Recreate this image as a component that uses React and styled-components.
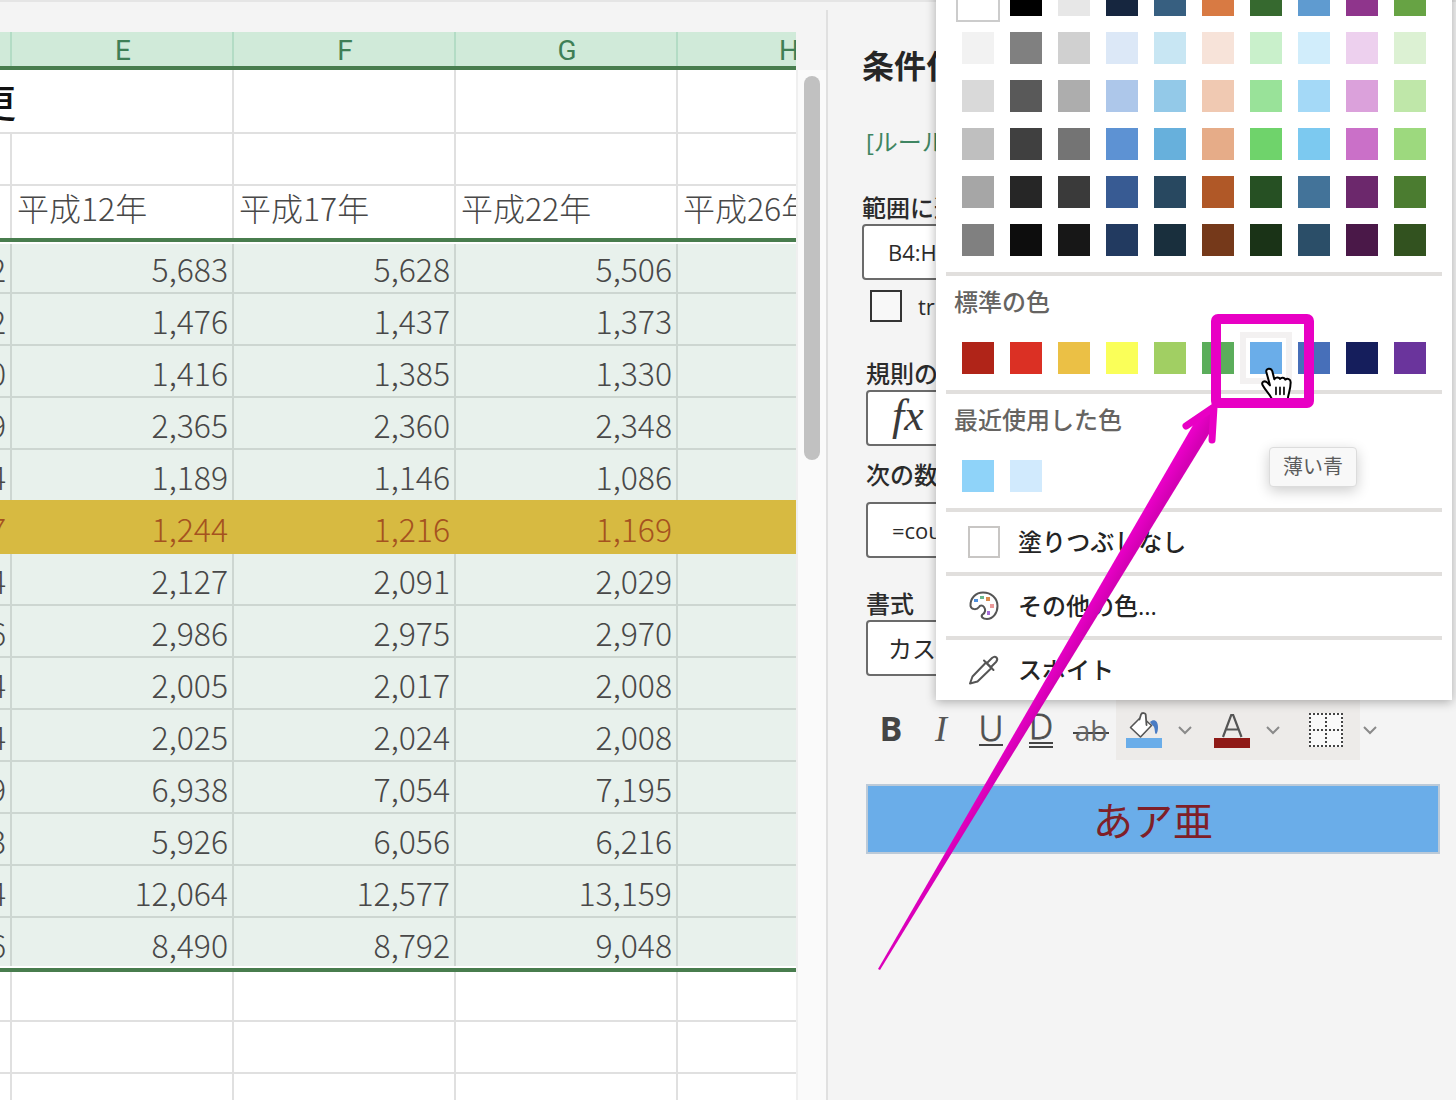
import React from "react";
import styled, { createGlobalStyle, css } from "styled-components";

const GlobalStyle = createGlobalStyle`
  *, *::before, *::after { box-sizing: border-box; }
  body {
    margin: 0;
    background: #f4f4f4;
    font-family: "Open Sans", "Noto Sans CJK JP", sans-serif;
    color: #2b2b2b;
  }
  button, input, select { font: inherit; color: inherit; }
`;

/* ---------- shell ---------- */

const Workspace = styled.main`
  position: relative;
  display: flex;
  height: 100vh;
  overflow: hidden;
  padding-top: 2px;
  background: linear-gradient(#e5e5e5, #e5e5e5) 0 0 / 100% 2px no-repeat;
`;

const Sheet = styled.section`
  flex: 1;
  min-width: 0;
  overflow: hidden;
  margin-top: 30px;
  background: #fff;
`;

const ScrollTrack = styled.div`
  flex: none;
  width: 30px;
  margin-top: 68px;
  padding: 6px 6px 0;
  border-left: 2px solid #efefef;
  background: #fafafa;
`;

const ScrollThumb = styled.div`
  width: 16px;
  height: 384px;
  border-radius: 8px;
  background: #c1c1c1;
`;

/* ---------- sheet ---------- */

const Table = styled.table`
  table-layout: fixed;
  width: 1110px;
  margin-left: -210px;
  border-collapse: separate;
  border-spacing: 0;
  font-family: "Noto Sans CJK JP", sans-serif;
  font-size: 32px;
  font-weight: 300;
  line-height: 40px;
  color: #484848;
`;

const ColumnHead = styled.th`
  height: 38px;
  padding: 4px 0 0;
  border-bottom: 4px solid #487d4e;
  background: #d0ead9;
  box-shadow: inset -2px 0 #b3dcc5;
  color: #3f7f56;
  font-family: Roboto, sans-serif;
  font-size: 28px;
  font-weight: 400;
  line-height: 30px;
`;

const Cell = styled.td`
  height: ${(p) => p.$height || 52}px;
  padding: 0 6px 0 5px;
  border-bottom: 2px solid #e0e0e0;
  box-shadow: inset -2px 0 #e0e0e0;
  overflow: hidden;
  white-space: nowrap;
`;

const TitleCell = styled(Cell)`
  padding-right: 218px;
  text-align: right;
  font-size: 38px;
  font-weight: 500;
  color: #111;
`;

const YearCell = styled(Cell)`
  padding-bottom: 10px;
  border-bottom: 4px solid #487d4e;
`;

const NumberCell = styled(Cell)`
  padding-top: 2px;
  border-color: #cdd6d1;
  background: #e8f1ec;
  box-shadow: inset -2px 0 #cdd6d1;
  text-align: right;
  ${(p) => p.$first && css`box-shadow: inset 0 2px #fff, inset -2px 0 #cdd6d1;`}
  ${(p) => p.$beforeMarked && css`border-color: #d7ba41;`}
  ${(p) => p.$marked && css`
    border-color: #d7ba41;
    background: #d7ba41;
    box-shadow: none;
    color: #a5521f;
  `}
  ${(p) => p.$last && css`
    height: 54px;
    border-bottom: 4px solid #487d4e;
    box-shadow: inset 0 -2px #fff, inset -2px 0 #cdd6d1;
  `}
`;

/* ---------- side pane ---------- */

const Pane = styled.aside`
  flex: none;
  width: 630px;
  margin-top: 8px;
  padding: 36px 16px 0 34px;
  border-left: 2px solid #e0e0e0;
`;

const PaneTitle = styled.h2`
  margin: 0 0 40px;
  font-size: 32px;
  font-weight: 700;
  line-height: 40px;
  color: #262626;
`;

const RuleLink = styled.a`
  display: block;
  margin: 0 0 34px 4px;
  font-size: 24px;
  line-height: 32px;
  color: #3f8562;
  text-decoration: none;
`;

const Group = styled.div`
  padding-left: 4px;
`;

const Label = styled.label`
  display: block;
  margin-top: ${(p) => p.$before || 0}px;
  margin-bottom: ${(p) => p.$after || 0}px;
  font-size: 24px;
  font-weight: 500;
  line-height: 32px;
`;

const field = css`
  display: block;
  width: 100%;
  height: 56px;
  border: 2px solid #6b6b6b;
  border-radius: 4px;
  background: #fff;
  text-align: left;
`;

const TextField = styled.input`
  ${field}
  padding: 0 24px;
  font-size: 22px;
`;

const KindButton = styled.button`
  ${field}
  padding: 0 24px 4px;
  color: #3a3a3a;
  font-family: "Liberation Serif", serif;
  font-size: 44px;
  font-style: italic;
  line-height: 48px;
`;

const FormatSelect = styled.select`
  ${field}
  appearance: none;
  padding: 0 20px;
  font-size: 24px;
`;

const CheckRow = styled.label`
  display: flex;
  align-items: center;
  gap: 16px;
  margin: 10px 0 36px;
  padding-left: 8px;
  font-size: 22px;
  line-height: 32px;
`;

const CheckBox = styled.input`
  appearance: none;
  width: 32px;
  height: 32px;
  margin: 0;
  border: 2px solid #333;
  background: #f8f8f8;
`;

const Toolbar = styled.div`
  display: flex;
  height: 60px;
  margin: 24px 0;
`;

const ToolButton = styled.button`
  display: flex;
  align-items: center;
  justify-content: center;
  width: ${(p) => p.$width || 50}px;
  padding: 0;
  border: 0;
  background: ${(p) => (p.$shaded ? "#edebe9" : "transparent")};
  color: #444;
`;

const MenuArrow = styled(ToolButton)`
  justify-content: flex-start;
  padding-left: 5px;
`;

const Bold = styled.b`
  padding-bottom: 4px;
  font-size: 34px;
  line-height: 36px;
`;

const Italic = styled.i`
  padding-bottom: 2px;
  font-family: "Liberation Serif", serif;
  font-size: 36px;
  line-height: 36px;
  color: #555;
`;

const Letter = styled.span`
  height: ${(p) => (p.$double ? 36 : 32)}px;
  border-bottom: ${(p) => (p.$double ? "6px double" : "2px solid")} #444;
  font-size: 34px;
  font-weight: 300;
  line-height: 28px;
  -webkit-text-stroke: 1px #555;
`;

const Struck = styled.span`
  padding: 0 2px;
  background: linear-gradient(#444, #444) 0 20px / 100% 2px no-repeat;
  font-size: 28px;
  font-weight: 400;
  line-height: 36px;
  color: #666;
`;

const Preview = styled.div`
  height: 70px;
  border: 2px solid #bccad8;
  background: #6aade9;
  color: #7f1f28;
  font-size: 40px;
  line-height: 70px;
  text-align: center;
`;

/* ---------- colour menu ---------- */

const Menu = styled.div`
  position: absolute;
  top: -32px;
  right: 4px;
  width: 516px;
  padding: 8px 10px 0;
  background: #fff;
  box-shadow: 0 2px 10px rgba(0, 0, 0, 0.3);
`;

const Section = styled.section`
  padding: 0 8px 8px;
  & + & { border-top: 4px solid #e1dfdd; }
`;

const SectionTitle = styled.h3`
  margin: 0 0 6px;
  font-size: 24px;
  font-weight: 500;
  line-height: 52px;
  color: #666462;
`;

const Swatches = styled.div`
  display: grid;
  grid-template-columns: repeat(10, 48px);
  grid-auto-rows: 48px;
  place-items: center;
`;

const Swatch = styled.button`
  width: 32px;
  height: 32px;
  padding: 0;
  border: 0;
  background: ${(p) => p.$color};
  ${(p) => p.$chosen && css`box-shadow: 0 0 0 4px #fff, 0 0 0 6px #ccc;`}
  ${(p) => p.$hovered && css`box-shadow: 0 0 0 4px #fff, 0 0 0 10px #f3f1f1;`}
`;

const MenuItem = styled.button`
  display: flex;
  align-items: center;
  gap: 18px;
  width: 100%;
  height: 64px;
  padding: 0 22px;
  border: 0;
  border-top: 4px solid #e1dfdd;
  background: #fff;
  font-size: 24px;
  font-weight: 500;
  line-height: 32px;
  color: #242424;
`;

const NoFill = styled.span`
  width: 32px;
  height: 32px;
  border: 2px solid #c8c6c4;
`;

const Tooltip = styled.div`
  position: absolute;
  top: 479px;
  left: 333px;
  padding: 0 13px;
  border: 1px solid #dcdcdc;
  border-radius: 4px;
  background: #f8f8f8;
  box-shadow: 0 4px 14px rgba(0, 0, 0, 0.2);
  color: #5c5c5c;
  font-size: 20px;
  line-height: 38px;
`;

const Annotation = styled.svg`
  position: absolute;
  top: 0;
  right: 0;
  pointer-events: none;
`;

/* ---------- icons ---------- */

const Chevron = () => (
  <svg width="16" height="10" viewBox="0 0 16 10" fill="none" stroke="#8a8a8a" strokeWidth="2">
    <path d="M2 2l6 6 6-6" />
  </svg>
);

const FillIcon = () => (
  <svg width="36" height="40" viewBox="0 0 36 40">
    <path d="M24 12c4-4 8-1 8 5 0 4-1 7-2 7-2-1 0-7-4-9z" fill="#4a7cc4" />
    <path d="M13.500 8.500 4.500 17.500 14.500 27 25.500 15.500 20.500 11z" fill="#fff" stroke="#555" strokeWidth="1.600" strokeLinejoin="round" />
    <path d="M13.500 9.500 15 4.500c.6-2 4.500-2 4.700.2L20.500 15" fill="#fff" stroke="#555" strokeWidth="1.800" strokeLinecap="round" />
    <rect y="28" width="36" height="10" fill="#6aade9" />
  </svg>
);

const FontColorIcon = () => (
  <svg width="36" height="40" viewBox="0 0 36 40">
    <path d="M9 27 17.200 5h2L27.500 27M12 19.500h12.500" fill="none" stroke="#555" strokeWidth="2.200" />
    <rect y="28" width="36" height="10" fill="#8f1a17" />
  </svg>
);

const BordersIcon = () => (
  <svg width="34" height="34" viewBox="0 0 34 34">
    <rect width="34" height="34" fill="#fafafa" />
    <path d="M0 1h34M0 17h34M0 33h34M1 0v34M17 0v34M33 0v34" fill="none" stroke="#444" strokeWidth="2" strokeDasharray="2 2" />
  </svg>
);

const PaletteIcon = () => (
  <svg width="32" height="32" viewBox="0 0 32 32">
    <path
      d="M2.500 16C2 8 8 2.500 15 2.500 23 2.500 29.500 8 29.500 16c0 7-4.500 13-10.500 13-4.500 0-6.500-2.500-4.500-4.500 3-2 3.500-4.500 1.500-7.500-1.500-2-4-2-5 0C9 20 3.500 20 2.500 16z"
      fill="#fff" stroke="#555" strokeWidth="2"
    />
    <rect x="6" y="9" width="4" height="3" fill="#4f8fdc" />
    <rect x="12" y="6" width="4" height="3" fill="#69b88d" />
    <rect x="18" y="7" width="4" height="4" fill="#d98a4b" />
    <rect x="22" y="14" width="4" height="4" fill="#ec9a9a" />
    <rect x="19" y="21" width="3" height="4" fill="#a56bd6" />
  </svg>
);

const DropperIcon = () => (
  <svg width="32" height="32" viewBox="0 0 32 32" fill="none" stroke="#555" strokeWidth="2" strokeLinejoin="round" strokeLinecap="round">
    <path d="M2 29.500 4.500 22.500 18 8.500l5.500 5.500L9.500 27.500z" />
    <path d="M16 6.500 25.500 16M19.500 8.500 24 4c3.500-3 7 .5 4 4L23.500 12.500" />
  </svg>
);

/* ---------- data ---------- */

const COLUMNS = ["D", "E", "F", "G", "H"];
const MARKED_ROW = 5;

const ROWS = [
  ["2", "5,683", "5,628", "5,506"],
  ["2", "1,476", "1,437", "1,373"],
  ["0", "1,416", "1,385", "1,330"],
  ["9", "2,365", "2,360", "2,348"],
  ["4", "1,189", "1,146", "1,086"],
  ["7", "1,244", "1,216", "1,169"],
  ["4", "2,127", "2,091", "2,029"],
  ["6", "2,986", "2,975", "2,970"],
  ["4", "2,005", "2,017", "2,008"],
  ["4", "2,025", "2,024", "2,008"],
  ["9", "6,938", "7,054", "7,195"],
  ["3", "5,926", "6,056", "6,216"],
  ["4", "12,064", "12,577", "13,159"],
  ["6", "8,490", "8,792", "9,048"],
];

const THEME_COLORS = [
  "#ffffff", "#000000", "#e7e7e7", "#16263f", "#375f80", "#d87a43", "#36692f", "#5f9bd0", "#8f358c", "#67a344",
  "#f2f2f2", "#808080", "#d0d0d0", "#dce8f7", "#c8e6f3", "#f7e3d9", "#c9f0cb", "#d1edfb", "#edd0ee", "#dcf1d3",
  "#d9d9d9", "#595959", "#adadad", "#adc7ea", "#93c9e8", "#f0c9b2", "#99e299", "#a4d9f7", "#dba1db", "#bfe7a9",
  "#bfbfbf", "#404040", "#747474", "#5d92d3", "#67b0dc", "#e6ac88", "#6fd36b", "#7cc9f0", "#ca70c8", "#9dd97e",
  "#a6a6a6", "#262626", "#3a3a3a", "#385b93", "#284860", "#b05827", "#265023", "#437399", "#6c286c", "#4b7c30",
  "#808080", "#0d0d0d", "#171717", "#223a60", "#192f3d", "#75391a", "#1a3317", "#2b4e68", "#4a1848", "#32521f",
];
const STANDARD_COLORS = [
  "#b02418", "#db3024", "#ebc045", "#faff59", "#a1cf63", "#5bad5b", "#6aade9", "#476fb9", "#151e5c", "#6a349c",
];
const RECENT_COLORS = ["#8fd3f9", "#d1eafd"];

function Grid() {
  return (
    <Table>
      <thead>
        <tr>
          {COLUMNS.map((c) => <ColumnHead key={c} scope="col">{c}</ColumnHead>)}
        </tr>
      </thead>
      <tbody>
        <tr>
          <TitleCell colSpan={2} $height={64}>更</TitleCell>
          <Cell /><Cell /><Cell />
        </tr>
        <tr>{COLUMNS.map((c) => <Cell key={c} />)}</tr>
        <tr>
          {["", "平成12年", "平成17年", "平成22年", "平成26年"].map((t, i) => (
            <YearCell key={i} $height={56}>{t}</YearCell>
          ))}
        </tr>
        {ROWS.map((row, r) => (
          <tr key={r}>
            {[...row, ""].map((v, c) => (
              <NumberCell
                key={c}
                $first={r === 0}
                $beforeMarked={r === MARKED_ROW - 1}
                $marked={r === MARKED_ROW}
                $last={r === ROWS.length - 1}
              >
                {v}
              </NumberCell>
            ))}
          </tr>
        ))}
        {[50, 52, 52].map((h, i) => (
          <tr key={i}>{COLUMNS.map((c) => <Cell key={c} $height={h} />)}</tr>
        ))}
      </tbody>
    </Table>
  );
}

function FormatToolbar() {
  return (
    <Toolbar>
      <ToolButton aria-label="太字"><Bold>B</Bold></ToolButton>
      <ToolButton aria-label="斜体"><Italic>I</Italic></ToolButton>
      <ToolButton aria-label="下線"><Letter>U</Letter></ToolButton>
      <ToolButton aria-label="二重下線"><Letter $double>D</Letter></ToolButton>
      <ToolButton aria-label="取り消し線"><Struck>ab</Struck></ToolButton>
      <ToolButton aria-label="塗りつぶしの色" $width={56} $shaded><FillIcon /></ToolButton>
      <MenuArrow aria-label="塗りつぶしの色の一覧" $width={32} $shaded><Chevron /></MenuArrow>
      <ToolButton aria-label="フォントの色" $width={56} $shaded><FontColorIcon /></ToolButton>
      <MenuArrow aria-label="フォントの色の一覧" $width={32} $shaded><Chevron /></MenuArrow>
      <ToolButton aria-label="罫線" $width={68} $shaded><BordersIcon /></ToolButton>
      <ToolButton aria-label="罫線の一覧" $width={20}><Chevron /></ToolButton>
    </Toolbar>
  );
}

function ColorMenu() {
  return (
    <Menu>
      <Section>
        <Swatches>
          {THEME_COLORS.map((c, i) => <Swatch key={i} $color={c} $chosen={i === 0} aria-label={c} />)}
        </Swatches>
      </Section>
      <Section>
        <SectionTitle>標準の色</SectionTitle>
        <Swatches>
          {STANDARD_COLORS.map((c, i) => <Swatch key={c} $color={c} $hovered={i === 6} aria-label={c} />)}
        </Swatches>
      </Section>
      <Section>
        <SectionTitle>最近使用した色</SectionTitle>
        <Swatches>
          {RECENT_COLORS.map((c) => <Swatch key={c} $color={c} aria-label={c} />)}
        </Swatches>
      </Section>
      <MenuItem><NoFill />塗りつぶしなし</MenuItem>
      <MenuItem><PaletteIcon />その他の色...</MenuItem>
      <MenuItem><DropperIcon />スポイト</MenuItem>
      <Tooltip role="tooltip">薄い青</Tooltip>
    </Menu>
  );
}

function Pointer() {
  return (
    <Annotation width="628" height="1000" viewBox="828 0 628 1000">
      <defs>
        <linearGradient id="shaft" gradientUnits="userSpaceOnUse" x1="1035" y1="683" x2="1050" y2="692">
          <stop offset="0" stopColor="#f200cf" />
          <stop offset="1" stopColor="#d400b4" />
        </linearGradient>
      </defs>
      <g transform="translate(1140 300) scale(.3333)" stroke="#000" strokeWidth="6" strokeLinejoin="round" strokeLinecap="round">
        <path
          d="M379 216c-2-12 15-13 18-2l6 24c3-8 15-7 17-1 4-6 14-5 16 2 6-5 16-2 16 8 0 18-5 30-8 45v12h-46c-1-14-19-28-30-48-5-10 6-16 14-8l8 8z"
          fill="#fff"
        />
        <path d="M408 262v21M420 262v21M432 262v21" fill="none" strokeWidth="5" />
      </g>
      <rect x="1216" y="319" width="93" height="84" rx="2" fill="none" stroke="#e800c4" strokeWidth="10" />
      <path d="M878 969 880 970 1212 429 1215 406 1196 420z" fill="url(#shaft)" />
      <path d="M1186 426 1214 407 1212 440" fill="none" stroke="#e800c4" strokeWidth="7" strokeLinecap="round" strokeLinejoin="round" />
    </Annotation>
  );
}

export default function App() {
  return (
    <>
      <GlobalStyle />
      <Workspace>
        <Sheet><Grid /></Sheet>
        <ScrollTrack><ScrollThumb /></ScrollTrack>
        <Pane>
          <PaneTitle>条件付き書式</PaneTitle>
          <RuleLink href="#rule">[ルール</RuleLink>
          <Label htmlFor="range">範囲に適用</Label>
          <TextField id="range" defaultValue="B4:H" />
          <CheckRow><CheckBox type="checkbox" />tr</CheckRow>
          <Group>
            <Label htmlFor="kind">規則の種類</Label>
            <KindButton id="kind">fx</KindButton>
            <Label htmlFor="formula" $before={13} $after={11}>次の数式</Label>
            <TextField id="formula" defaultValue="=cou" />
            <Label htmlFor="format" $before={30}>書式</Label>
            <FormatSelect id="format"><option>カスタム</option></FormatSelect>
            <FormatToolbar />
            <Preview>あア亜</Preview>
          </Group>
        </Pane>
        <ColorMenu />
        <Pointer />
      </Workspace>
    </>
  );
}
